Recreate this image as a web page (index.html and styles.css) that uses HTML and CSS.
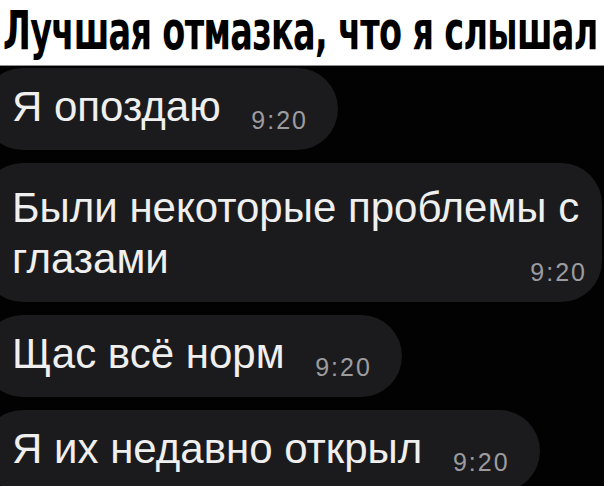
FILE: index.html
```html
<!DOCTYPE html>
<html lang="ru">
<head>
    <meta charset="UTF-8">
    <meta name="viewport" content="width=device-width, initial-scale=1.0">
    <title>Лучшая отмазка</title>
    <link rel="stylesheet" href="styles.css">
</head>
<body>
    <header class="caption">
        <h1>Лучшая отмазка, что я слышал</h1>
    </header>

    <main class="chat">
        <div class="bubble"><span class="text">Я опоздаю</span> <span class="time">9:20</span></div>
        <div class="bubble long"><span class="text">Были некоторые проблемы с</span> <span class="text">глазами</span> <span class="time">9:20</span></div>
        <div class="bubble"><span class="text">Щас всё норм</span> <span class="time">9:20</span></div>
        <div class="bubble"><span class="text">Я их недавно открыл</span> <span class="time">9:20</span></div>
    </main>
</body>
</html>
```

FILE: styles.css
```css
body {
    margin: 0;
    height: 486px;
    overflow: hidden;
    background-color: #020202;
    font-family: "Liberation Sans", Arial, sans-serif;
}

.caption {
    height: 65px;
    background-color: #fff;
    border-bottom: 1px solid #8e8e8e;
    overflow: hidden;
}

/* narrow bold title: set small, then stretched up to the tall look */
.caption h1 {
    margin: 0;
    padding: 1px 0 0 3px;
    font-family: "DejaVu Sans", sans-serif;
    font-stretch: condensed;
    font-weight: bold;
    font-size: 37.3px;
    line-height: 40px;
    letter-spacing: -0.7px;
    color: #000;
    white-space: nowrap;
    transform: scaleY(1.45);
    transform-origin: left top;
}

.chat {
    display: flex;
    flex-direction: column;
    align-items: flex-start;
    gap: 13px;
    padding-top: 2px;
}

.bubble {
    margin-left: -18px;
    max-width: 620px;
    box-sizing: border-box;
    padding: 14px 30px 18px 30px;
    border-radius: 41px;
    background-color: #1b1b1d;
    color: #efefef;
    font-size: 42px;
    line-height: 50px;
}

.bubble.long {
    padding: 19px 15px 18px 30px;
    line-height: 51px;
    text-align-last: justify;
}

.time {
    margin-left: 19px;
    font-size: 25px;
    line-height: 20px;
    letter-spacing: 2px;
    color: #9c9ca0;
    vertical-align: -8px;
}
```
